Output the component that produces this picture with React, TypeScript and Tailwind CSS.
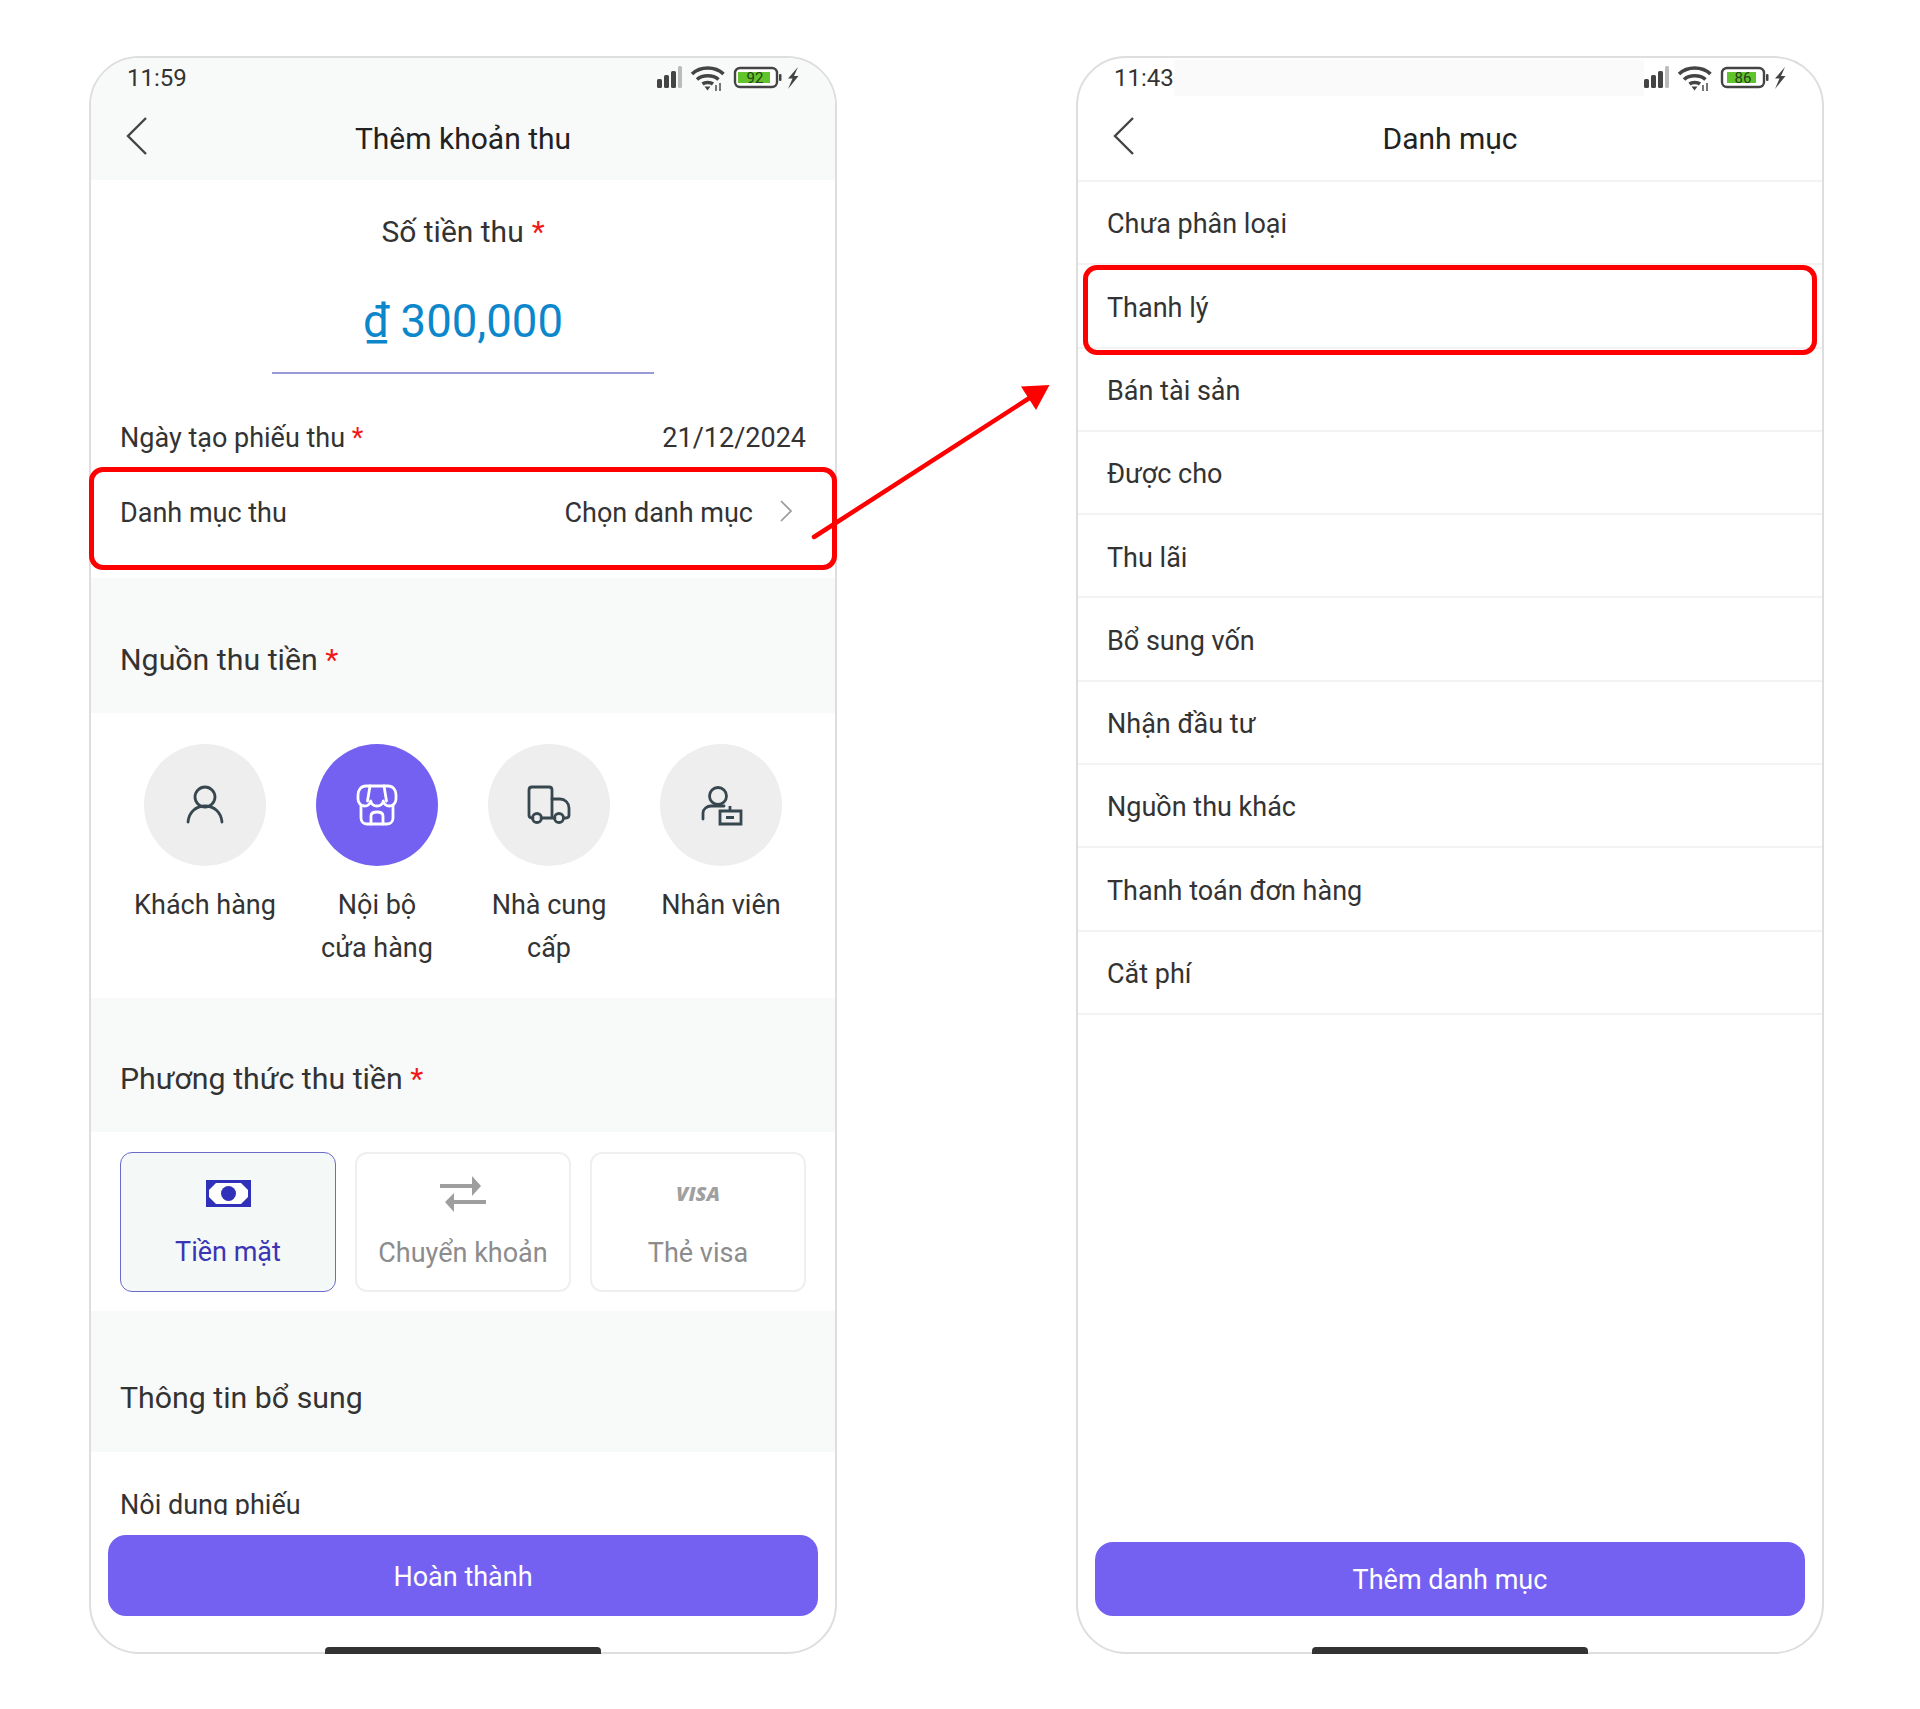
const font = "font-['Roboto',sans-serif]";

const sources = [
  { lines: ["Khách hàng"], icon: "person" },
  { lines: ["Nội bộ", "cửa hàng"], icon: "store", active: true },
  { lines: ["Nhà cung", "cấp"], icon: "truck" },
  { lines: ["Nhân viên"], icon: "staff" },
];

const categories = [
  "Chưa phân loại",
  "Thanh lý",
  "Bán tài sản",
  "Được cho",
  "Thu lãi",
  "Bổ sung vốn",
  "Nhận đầu tư",
  "Nguồn thu khác",
  "Thanh toán đơn hàng",
  "Cắt phí",
];

function StatusIcons({ battery }: { battery: string }) {
  const full = battery === "92";
  return (
    <svg width="142" height="28" viewBox="0 0 142 28" className="shrink-0">
      <g fill="#444">
        <rect x="0" y="15" width="5" height="9" rx="1.5" />
        <rect x="7" y="11" width="5" height="13" rx="1.5" />
        <rect x="14" y="7" width="5" height="17" rx="1.5" />
        <rect x="21" y="2" width="4" height="22" rx="1.5" fill="#bbb" />
      </g>
      <g fill="none" stroke="#444" strokeWidth="3.6">
        <path d="M35 10c8.500-8 23-8 31.500 0" />
        <path d="M40 15.500c5.500-5 16-5 21.500 0" />
        <path d="M45.500 20c2.500-2 8-2 10.500 0" />
      </g>
      <path d="M47.500 22.500h6l-3 4z" fill="#444" />
      <path d="M59 27v-6M63 27v-8" stroke="#777" strokeWidth="2" />
      <rect x="78" y="4" width="42" height="19" rx="5" fill="#fff" stroke="#444" strokeWidth="2.4" />
      <rect x={full ? 81 : 83} y="8" width={full ? 32 : 29} height="11" fill="#62c42c" />
      <rect x="122" y="10" width="2.5" height="7" rx="1" fill="#444" />
      <text x={full ? 98 : 99} y="19" textAnchor="middle" fontFamily="Roboto, sans-serif" fontSize="15" fill="#26401a">
        {battery}
      </text>
      <path d="M141 3l-10 11.500h4.500L131 25l10.500-13H137z" fill="#444" />
    </svg>
  );
}

function Back() {
  return (
    <svg width="24" height="40" viewBox="0 0 24 40" fill="none" stroke="#444" strokeWidth="2.4" className="shrink-0">
      <path d="M21 2 3 20l18 18" />
    </svg>
  );
}

function SourceIcon({ name }: { name: string }) {
  const stroke = name === "store" ? "#fff" : "#37474f";
  return (
    <svg width="122" height="122" viewBox="0 0 122 122" fill="none" stroke={stroke} strokeWidth="2.8" strokeLinecap="round" strokeLinejoin="round">
      {name === "person" && (
        <>
          <circle cx="61" cy="53" r="10" />
          <path d="M44 78c1-10 8-16 17-16s16 6 17 16" />
        </>
      )}
      {name === "store" && (
        <>
          <path d="M50 42h22c5 0 8 4 8 9v4c0 4-3 7-6.500 7-3 0-5.500-2-6.200-5-.7 3-3.300 5-6.300 5s-5.600-2-6.300-5c-.7 3-3.200 5-6.200 5-3.500 0-6.500-3-6.500-7v-4c0-5 3-9 8-9z" />
          <path d="M54 42l-2.500 15M68 42l2.500 15" />
          <path d="M45 62v12c0 4 3 6 6 6h20c3 0 6-2 6-6V62" />
          <path d="M55 80v-8c0-3 2-4 6-4s6 1 6 4v8" />
        </>
      )}
      {name === "truck" && (
        <>
          <path d="M45 74h-1c-2 0-3-1-3-3V46c0-2 1-3 3-3h17c2 0 3 1 3 3v28M53 74h14" />
          <path d="M64 55h8c5 0 9 4 9 9v7c0 2-1 3-3 3h-2" />
          <circle cx="49" cy="74" r="4.5" />
          <circle cx="71" cy="74" r="4.5" />
        </>
      )}
      {name === "staff" && (
        <>
          <circle cx="58" cy="52" r="8.5" />
          <path d="M43 75v-6c0-4 4-7 8-7h13" />
          <path d="M60 67h21v13H60zM70 67v-5M66 73.500h8" strokeLinecap="butt" strokeLinejoin="miter" />
        </>
      )}
    </svg>
  );
}

function MethodCard({ label, active, children }: { label: string; active?: boolean; children: React.ReactNode }) {
  return (
    <div
      className={`w-[216px] h-[140px] rounded-[12px] flex flex-col items-center pt-[20px] ${
        active ? "bg-[#f4f9f7] border-[1.5px] border-[#6a6ac8] text-[#3a35b5]" : "bg-white border-2 border-[#efefef] text-[#8c8c8c]"
      }`}
    >
      <div className="h-[40px] flex items-center justify-center">{children}</div>
      <div className="mt-[22px] text-[27px] leading-[34px]">{label}</div>
    </div>
  );
}

function SectionTitle({ title, required, height, top }: { title: string; required?: boolean; height: string; top: string }) {
  return (
    <div className={`bg-[#f8faf9] px-[29px] text-[30.3px] leading-[36px] text-[#333] ${height} ${top}`}>
      {title}
      {required && <span className="text-[#f01818]"> *</span>}
    </div>
  );
}

function Footer({ label, height, top }: { label: string; height: string; top: string }) {
  return (
    <div className="mx-[17px] shrink-0">
      <div className={`${height} ${top} rounded-[18px] bg-[#7461f1] text-white text-[27px] flex items-center justify-center`}>{label}</div>
    </div>
  );
}

function HomeBar() {
  return <div className="absolute left-[234px] -bottom-[2px] w-[276px] h-[7px] rounded-t-[4px] bg-[#333]" />;
}

function AddIncome() {
  return (
    <div className="relative w-[748px] h-[1598px] shrink-0 rounded-[50px] border-2 border-[#dedede] bg-white flex flex-col">
      <div className="shrink-0 h-[122px] rounded-t-[48px] bg-[#f8faf9]">
        <div className="h-[40px] pl-[36px] pr-[36px] flex items-center justify-between">
          <span className="text-[24px] text-[#333]">11:59</span>
          <StatusIcons battery="92" />
        </div>
        <div className="relative h-[82px] pb-[2px] flex items-center justify-center">
          <div className="absolute left-[34px] top-[18px]">
            <Back />
          </div>
          <span className="text-[30px] text-[#222]">Thêm khoản thu</span>
        </div>
      </div>

      <div className="flex-1 min-h-0 overflow-hidden">
        <div className="h-[102px] flex items-center justify-center text-[30px] text-[#333]">
          Số tiền thu<span className="text-[#f01818] ml-[8px]">*</span>
        </div>
        <div className="h-[80px] flex items-center justify-center text-[45.5px] text-[#0d87cc]">₫ 300,000</div>
        <div className="mx-[181px] mt-[10px] h-[2px] bg-[#9a9ad6]" />
        <div className="mt-[34px] h-[60px] px-[29px] flex items-center justify-between text-[27px] text-[#333]">
          <span>
            Ngày tạo phiếu thu<span className="text-[#f01818]"> *</span>
          </span>
          <span>21/12/2024</span>
        </div>
        <div className="relative h-[100px] pb-[10px] px-[29px] flex items-center justify-between text-[27px] text-[#333]">
          <span>Danh mục thu</span>
          <span className="flex items-center gap-[26px] pr-[13px]">
            Chọn danh mục
            <svg width="14" height="24" viewBox="0 0 14 24" fill="none" stroke="#999" strokeWidth="1.7" className="-mt-[4px]">
              <path d="M2 2l10 10L2 22" />
            </svg>
          </span>
        </div>
        <div className="h-[10px]" />

        <SectionTitle title="Nguồn thu tiền" required height="h-[135px]" top="pt-[64px]" />
        <div className="h-[285px] pt-[31px] pl-[53px] flex gap-[50px]">
          {sources.map((s) => (
            <div key={s.icon} className="w-[122px] flex flex-col items-center">
              <div className={`w-[122px] h-[122px] rounded-full ${s.active ? "bg-[#7461f1]" : "bg-[#eeeeee]"}`}>
                <SourceIcon name={s.icon} />
              </div>
              <div className="mt-[18px] flex flex-col items-center text-[27px] leading-[43px] text-[#333] whitespace-nowrap">
                {s.lines.map((l) => (
                  <span key={l}>{l}</span>
                ))}
              </div>
            </div>
          ))}
        </div>

        <SectionTitle title="Phương thức thu tiền" required height="h-[134px]" top="pt-[63px]" />
        <div className="h-[179px] pt-[20px] px-[29px] flex gap-[19px]">
          <MethodCard label="Tiền mặt" active>
            <svg width="45" height="27" viewBox="0 0 45 27">
              <rect width="45" height="27" rx="1" fill="#3030b8" />
              <path d="M10 3h25l7 7v7l-7 7H10l-7-7v-7z" fill="#fff" />
              <path d="M0 0h6L0 6zM45 0h-6l6 6zM0 27h6l-6-6zM45 27h-6l6-6z" fill="#3030b8" />
              <circle cx="22.500" cy="13.500" r="7.500" fill="#3030b8" />
            </svg>
          </MethodCard>
          <MethodCard label="Chuyển khoản">
            <svg width="46" height="36" viewBox="0 0 46 36" fill="#9e9e9e">
              <path d="M0 8h32V0l9 10-9 10v-8H0zM46 24H14v-7L5 26l9 10v-8h32z" />
            </svg>
          </MethodCard>
          <MethodCard label="Thẻ visa">
            <span className="font-['Open_Sans',sans-serif] text-[20px] font-extrabold italic text-[#a0a0a0]">VISA</span>
          </MethodCard>
        </div>

        <SectionTitle title="Thông tin bổ sung" height="h-[141px]" top="pt-[69px]" />
        <div className="pt-[35px] px-[29px] text-[27px] leading-[36px] text-[#333]">Nội dung phiếu</div>
      </div>

      <div className="h-[137px] shrink-0 pt-[20px]">
        <Footer label="Hoàn thành" height="h-[81px]" top="pt-[3px]" />
      </div>

      <div className="absolute -inset-x-[2px] top-[409px] h-[103px] rounded-[14px] border-[5px] border-[#fe0000]" />
      <HomeBar />
    </div>
  );
}

function Categories() {
  return (
    <div className="relative w-[748px] h-[1598px] shrink-0 rounded-[50px] border-2 border-[#dedede] bg-white flex flex-col">
      <div className="shrink-0 h-[124px] border-b-2 border-[#f3f3f3]">
        <div className="h-[40px] pl-[36px] pr-[36px] flex items-center">
          <span className="text-[24px] text-[#333]">11:43</span>
          <div className="flex-1 h-[36px] bg-[#fafafa]" />
          <StatusIcons battery="86" />
        </div>
        <div className="relative h-[82px] pb-[2px] flex items-center justify-center">
          <div className="absolute left-[34px] top-[18px]">
            <Back />
          </div>
          <span className="text-[30px] text-[#222]">Danh mục</span>
        </div>
      </div>
      <div className="flex-1 min-h-0">
        {categories.map((c) => (
          <div key={c} className="relative h-[83.3px] pt-[4px] px-[29px] flex items-center border-b-2 border-[#f3f3f3] text-[27px] text-[#333]">
            {c}
            {c === "Thanh lý" && (
              <div className="absolute inset-x-[5px] top-0 -bottom-[8px] rounded-[14px] border-[5px] border-[#fe0000]" />
            )}
          </div>
        ))}
      </div>
      <div className="h-[110px] shrink-0">
        <Footer label="Thêm danh mục" height="h-[74px]" top="pt-[3px]" />
      </div>
      <HomeBar />
    </div>
  );
}

export default function App() {
  return (
    <div className={`relative w-[1920px] h-[1709px] bg-white pt-[56px] pl-[89px] flex gap-[239px] ${font}`}>
      <AddIncome />
      <Categories />
      <svg className="absolute left-0 top-0" width="1920" height="1709" fill="none">
        <path d="M814 537 1031 397" stroke="#fe0000" strokeWidth="4.5" strokeLinecap="round" />
        <path d="M1049.500 385 1021 386.500 1036 410z" fill="#fe0000" />
      </svg>
    </div>
  );
}
